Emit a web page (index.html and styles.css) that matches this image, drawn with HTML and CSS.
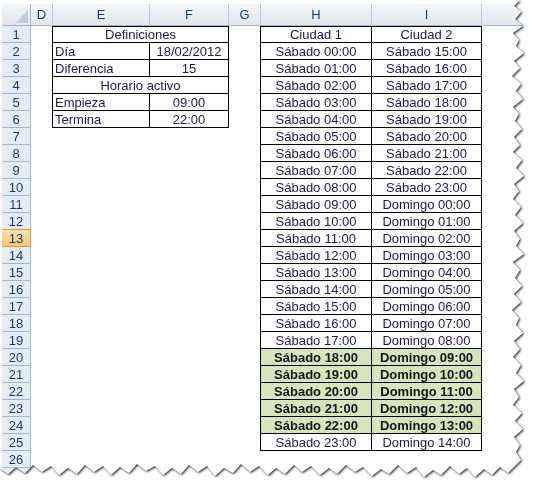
FILE: index.html
```html
<!DOCTYPE html>
<html lang="es">
<head>
<meta charset="utf-8">
<title>Hoja</title>
<link rel="stylesheet" href="styles.css">
</head>
<body>
<div class="page">
 <div class="tear">
  <div class="paper">
   <div class="sheet">
    <div class="ch corner"><svg class="tri" width="13" height="13" viewBox="0 0 13 13"><defs><linearGradient id="g" x1="0" y1="0" x2="1" y2="1"><stop offset="0" stop-color="#dfe6ef"/><stop offset="1" stop-color="#b4c3d5"/></linearGradient></defs><polygon points="13,0 13,13 0,13" fill="url(#g)"/></svg></div>
    <div class="ch">D</div>
    <div class="ch">E</div>
    <div class="ch">F</div>
    <div class="ch">G</div>
    <div class="ch">H</div>
    <div class="ch">I</div>
    <div class="ch last"></div>

    <div class="rh">1</div>
    <div class="t cef first top">Definiciones</div>
    <div class="t chh first top">Ciudad 1</div>
    <div class="t ci top">Ciudad 2</div>

    <div class="rh">2</div>
    <div class="t ce first">Día</div>
    <div class="t cf">18/02/2012</div>
    <div class="t chh first">Sábado 00:00</div>
    <div class="t ci">Sábado 15:00</div>

    <div class="rh">3</div>
    <div class="t ce first">Diferencia</div>
    <div class="t cf">15</div>
    <div class="t chh first">Sábado 01:00</div>
    <div class="t ci">Sábado 16:00</div>

    <div class="rh">4</div>
    <div class="t cef first">Horario activo</div>
    <div class="t chh first">Sábado 02:00</div>
    <div class="t ci">Sábado 17:00</div>

    <div class="rh">5</div>
    <div class="t ce first">Empieza</div>
    <div class="t cf">09:00</div>
    <div class="t chh first">Sábado 03:00</div>
    <div class="t ci">Sábado 18:00</div>

    <div class="rh">6</div>
    <div class="t ce first">Termina</div>
    <div class="t cf">22:00</div>
    <div class="t chh first">Sábado 04:00</div>
    <div class="t ci">Sábado 19:00</div>

    <div class="rh">7</div>
    <div class="t chh first">Sábado 05:00</div>
    <div class="t ci">Sábado 20:00</div>

    <div class="rh">8</div>
    <div class="t chh first">Sábado 06:00</div>
    <div class="t ci">Sábado 21:00</div>

    <div class="rh">9</div>
    <div class="t chh first">Sábado 07:00</div>
    <div class="t ci">Sábado 22:00</div>

    <div class="rh">10</div>
    <div class="t chh first">Sábado 08:00</div>
    <div class="t ci">Sábado 23:00</div>

    <div class="rh">11</div>
    <div class="t chh first">Sábado 09:00</div>
    <div class="t ci">Domingo 00:00</div>

    <div class="rh">12</div>
    <div class="t chh first">Sábado 10:00</div>
    <div class="t ci">Domingo 01:00</div>

    <div class="rh sel">13</div>
    <div class="t chh first">Sábado 11:00</div>
    <div class="t ci">Domingo 02:00</div>

    <div class="rh">14</div>
    <div class="t chh first">Sábado 12:00</div>
    <div class="t ci">Domingo 03:00</div>

    <div class="rh">15</div>
    <div class="t chh first">Sábado 13:00</div>
    <div class="t ci">Domingo 04:00</div>

    <div class="rh">16</div>
    <div class="t chh first">Sábado 14:00</div>
    <div class="t ci">Domingo 05:00</div>

    <div class="rh">17</div>
    <div class="t chh first">Sábado 15:00</div>
    <div class="t ci">Domingo 06:00</div>

    <div class="rh">18</div>
    <div class="t chh first">Sábado 16:00</div>
    <div class="t ci">Domingo 07:00</div>

    <div class="rh">19</div>
    <div class="t chh first">Sábado 17:00</div>
    <div class="t ci">Domingo 08:00</div>

    <div class="rh">20</div>
    <div class="t chh first hl">Sábado 18:00</div>
    <div class="t ci hl">Domingo 09:00</div>

    <div class="rh">21</div>
    <div class="t chh first hl">Sábado 19:00</div>
    <div class="t ci hl">Domingo 10:00</div>

    <div class="rh">22</div>
    <div class="t chh first hl">Sábado 20:00</div>
    <div class="t ci hl">Domingo 11:00</div>

    <div class="rh">23</div>
    <div class="t chh first hl">Sábado 21:00</div>
    <div class="t ci hl">Domingo 12:00</div>

    <div class="rh">24</div>
    <div class="t chh first hl">Sábado 22:00</div>
    <div class="t ci hl">Domingo 13:00</div>

    <div class="rh">25</div>
    <div class="t chh first">Sábado 23:00</div>
    <div class="t ci">Domingo 14:00</div>

    <div class="rh">26</div>
    <div class="rh">27</div>
   </div>
  </div>
 </div>
</div>
</body>
</html>
```

FILE: styles.css
```css
html, body {
  margin: 0;
  padding: 0;
  background: #fff;
}

.page {
  width: 536px;
  height: 488px;
  overflow: hidden;
  background: #fff;
}

.tear {
  filter: drop-shadow(1.5px 1.5px 1px rgba(0, 0, 0, 0.85));
}

.paper {
  width: 536px;
  height: 488px;
  box-sizing: border-box;
  padding: 4px 0 0 2px;
  background: #fff;
  clip-path: polygon(0 0, 520px 0, 514px 6px, 521px 12px, 515px 19px, 523px 26px, 513px 33px, 519px 40px, 516px 46px, 524px 53px, 514px 61px, 520px 68px, 512px 76px, 521px 84px, 516px 91px, 523px 99px, 513px 107px, 519px 114px, 515px 121px, 522px 129px, 514px 137px, 520px 145px, 513px 152px, 522px 160px, 516px 168px, 524px 176px, 514px 184px, 519px 191px, 513px 199px, 521px 207px, 515px 215px, 523px 223px, 514px 231px, 520px 239px, 516px 246px, 524px 254px, 513px 262px, 520px 270px, 515px 278px, 522px 286px, 514px 294px, 521px 302px, 512px 310px, 519px 318px, 516px 325px, 523px 333px, 514px 341px, 520px 349px, 513px 357px, 521px 365px, 516px 373px, 524px 381px, 514px 389px, 519px 397px, 513px 405px, 522px 413px, 515px 421px, 523px 429px, 514px 437px, 520px 445px, 516px 452px, 521px 460px, 515px 466px, 508px 473px, 500px 467px, 492px 475px, 484px 469px, 475px 477px, 467px 468px, 459px 474px, 450px 466px, 441px 475px, 433px 470px, 424px 477px, 416px 467px, 407px 473px, 398px 465px, 389px 474px, 381px 469px, 372px 476px, 363px 467px, 355px 472px, 346px 465px, 337px 474px, 329px 468px, 320px 475px, 311px 466px, 302px 472px, 294px 465px, 285px 474px, 276px 468px, 268px 475px, 259px 466px, 250px 472px, 241px 464px, 233px 473px, 224px 468px, 215px 476px, 207px 466px, 198px 472px, 189px 465px, 181px 474px, 172px 468px, 163px 475px, 155px 466px, 146px 471px, 137px 464px, 129px 473px, 120px 467px, 111px 475px, 103px 466px, 94px 472px, 85px 465px, 77px 474px, 68px 468px, 59px 475px, 51px 466px, 42px 472px, 33px 465px, 25px 473px, 16px 467px, 8px 474px, 0 468px);
}

.sheet {
  display: grid;
  grid-template-columns: 29px 22px 97px 79px 32px 111px 110px 1fr;
  grid-template-rows: 22px;
  grid-auto-rows: 17px;
  font-family: "Liberation Sans", Arial, sans-serif;
  font-size: 13px;
  color: #22164d;
}

/* column headers */
.ch {
  box-sizing: border-box;
  display: flex;
  justify-content: center;
  align-items: center;
  padding-top: 1px;
  line-height: 20px;
  border-right: 1px solid #bcc8d6;
  border-bottom: 1px solid #9eb6ce;
  background: linear-gradient(#f4f6f8, #e2e7ed);
  color: #1e3a5f;
}

.ch.last {
  border-right: none;
}

.ch.corner {
  justify-content: flex-end;
  align-items: flex-end;
  padding: 0 2px 2px 0;
  border-right-color: #9eb6ce;
}

.tri {
  display: block;
}

/* row headers */
.rh {
  grid-column: 1;
  box-sizing: border-box;
  display: flex;
  justify-content: center;
  align-items: center;
  padding-top: 1px;
  line-height: 15px;
  border-right: 1px solid #9eb6ce;
  border-bottom: 1px solid #9eb6ce;
  background: #e4ecf7;
  color: #1e3a5f;
}

.rh.sel {
  background: linear-gradient(#fadfae, #f6c879);
  border-color: #f29536;
  box-shadow: 0 -1px 0 #f29536;
}

/* table cells */
.t {
  box-sizing: border-box;
  display: flex;
  justify-content: center;
  align-items: center;
  padding-top: 1px;
  line-height: 15px;
  white-space: nowrap;
  border-right: 1px solid #000;
  border-bottom: 1px solid #000;
}

.ce {
  grid-column: 3;
  justify-content: flex-start;
  padding-left: 2px;
}

.cf {
  grid-column: 4;
}

.cef {
  grid-column: 3 / span 2;
}

.chh {
  grid-column: 6;
}

.ci {
  grid-column: 7;
}

.first {
  box-shadow: -1px 0 0 #000;
}

.top {
  box-shadow: inset 0 1px 0 #000;
}

.first.top {
  box-shadow: -1px 0 0 #000, inset 0 1px 0 #000;
}

.hl {
  background: #d8e4bc;
  font-weight: bold;
  color: #151515;
}
```
